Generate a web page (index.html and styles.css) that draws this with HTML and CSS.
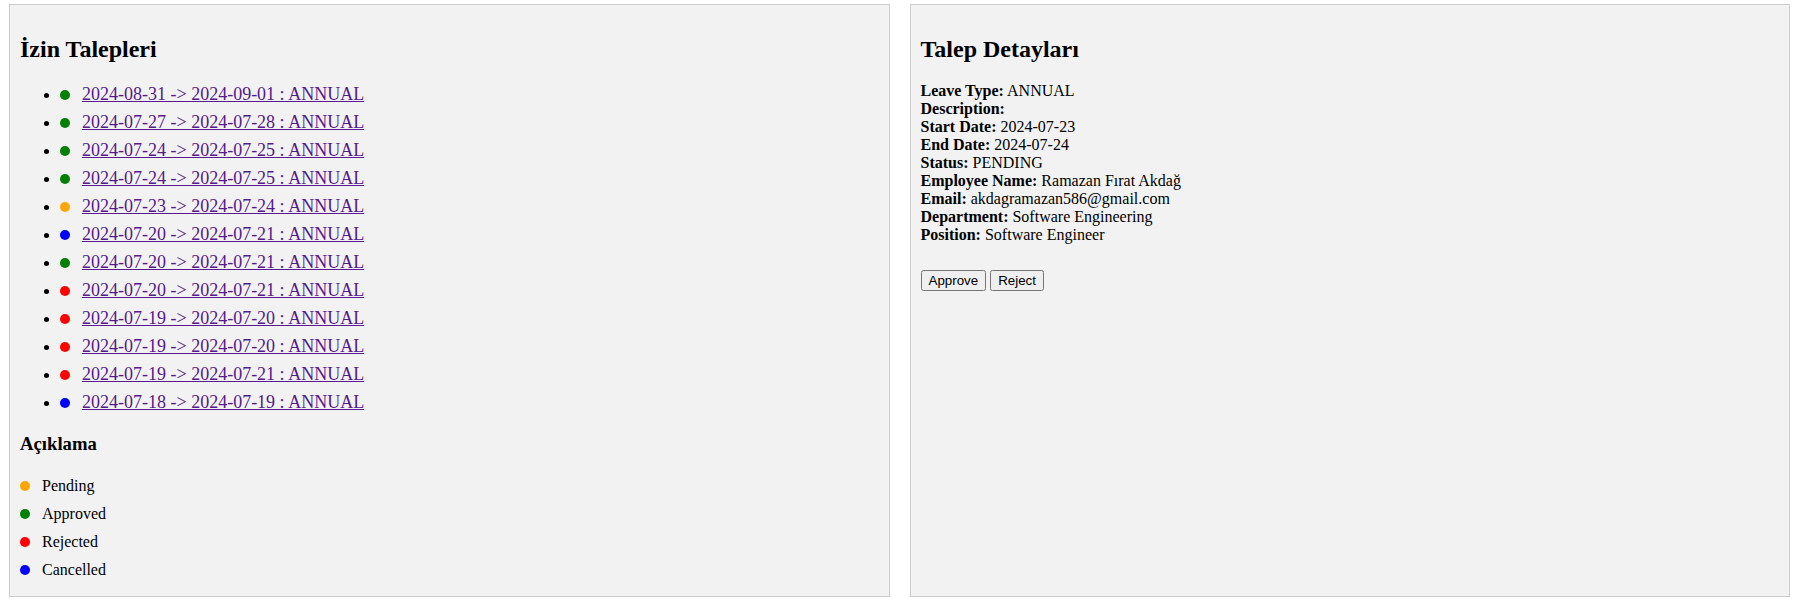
FILE: index.html
```html
<!DOCTYPE html>
<html lang="tr">
<head>
<meta charset="utf-8">
<title>İzin Talepleri</title>
<link rel="stylesheet" href="styles.css">
</head>
<body>
<div class="page">
  <section class="panel">
    <h2 class="title">İzin Talepleri</h2>
    <ul class="requests">
      <li class="request"><span class="dot green"></span><a href="#" class="link">2024-08-31 -&gt; 2024-09-01 : ANNUAL</a></li>
      <li class="request"><span class="dot green"></span><a href="#" class="link">2024-07-27 -&gt; 2024-07-28 : ANNUAL</a></li>
      <li class="request"><span class="dot green"></span><a href="#" class="link">2024-07-24 -&gt; 2024-07-25 : ANNUAL</a></li>
      <li class="request"><span class="dot green"></span><a href="#" class="link">2024-07-24 -&gt; 2024-07-25 : ANNUAL</a></li>
      <li class="request"><span class="dot orange"></span><a href="#" class="link">2024-07-23 -&gt; 2024-07-24 : ANNUAL</a></li>
      <li class="request"><span class="dot blue"></span><a href="#" class="link">2024-07-20 -&gt; 2024-07-21 : ANNUAL</a></li>
      <li class="request"><span class="dot green"></span><a href="#" class="link">2024-07-20 -&gt; 2024-07-21 : ANNUAL</a></li>
      <li class="request"><span class="dot red"></span><a href="#" class="link">2024-07-20 -&gt; 2024-07-21 : ANNUAL</a></li>
      <li class="request"><span class="dot red"></span><a href="#" class="link">2024-07-19 -&gt; 2024-07-20 : ANNUAL</a></li>
      <li class="request"><span class="dot red"></span><a href="#" class="link">2024-07-19 -&gt; 2024-07-20 : ANNUAL</a></li>
      <li class="request"><span class="dot red"></span><a href="#" class="link">2024-07-19 -&gt; 2024-07-21 : ANNUAL</a></li>
      <li class="request"><span class="dot blue"></span><a href="#" class="link">2024-07-18 -&gt; 2024-07-19 : ANNUAL</a></li>
    </ul>
    <h3 class="subtitle">Açıklama</h3>
    <div class="legend">
      <div class="legend-item"><span class="dot orange"></span>Pending</div>
      <div class="legend-item"><span class="dot green"></span>Approved</div>
      <div class="legend-item"><span class="dot red"></span>Rejected</div>
      <div class="legend-item"><span class="dot blue"></span>Cancelled</div>
    </div>
  </section>
  <section class="panel">
    <h2 class="title">Talep Detayları</h2>
    <div class="details">
      <div><strong>Leave Type:</strong> ANNUAL</div>
      <div><strong>Description:</strong> </div>
      <div><strong>Start Date:</strong> 2024-07-23</div>
      <div><strong>End Date:</strong> 2024-07-24</div>
      <div><strong>Status:</strong> PENDING</div>
      <div><strong>Employee Name:</strong> Ramazan Fırat Akdağ</div>
      <div><strong>Email:</strong> akdagramazan586@gmail.com</div>
      <div><strong>Department:</strong> Software Engineering</div>
      <div><strong>Position:</strong> Software Engineer</div>
    </div>
    <div class="actions">
      <button class="btn">Approve</button> <button class="btn">Reject</button>
    </div>
  </section>
</div>
</body>
</html>
```

FILE: styles.css
```css
html, body {
  margin: 0;
  background: #ffffff;
}
body {
  font-family: "Liberation Serif", "Times New Roman", serif;
  font-size: 16px;
  color: #000;
}
.page {
  display: flex;
  gap: 20px;
  padding: 4px 6px 0 9px;
}
.panel {
  flex: 1 1 0;
  background: #f2f2f2;
  border: 1px solid #cccccc;
  padding: 10px;
}
.title {
  font-size: 24px;
  font-weight: bold;
  margin: 20.5px 0 19.92px;
}
.requests {
  margin: 16px 0 0;
  padding-left: 40px;
}
.request {
  font-size: 18px;
  padding: 2px 0 5px;
}
.request::marker {
  font-size: 16px;
}
.link {
  color: #551a8b;
  text-decoration: underline;
}
.dot {
  display: inline-block;
  width: 10px;
  height: 10px;
  border-radius: 50%;
  margin-right: 12px;
}
.green { background: #008000; }
.orange { background: #ffa500; }
.red { background: #ff0000; }
.blue { background: #0000ff; }
.subtitle {
  font-size: 18.72px;
  font-weight: bold;
  margin: 14.5px 0 18.72px;
}
.legend-item {
  padding: 3px 0 7px;
}
.details {
  line-height: 18px;
}
.actions {
  margin-top: 25.5px;
}
.btn {
  font-family: "Liberation Sans", Arial, sans-serif;
  font-size: 13.33px;
}
```
